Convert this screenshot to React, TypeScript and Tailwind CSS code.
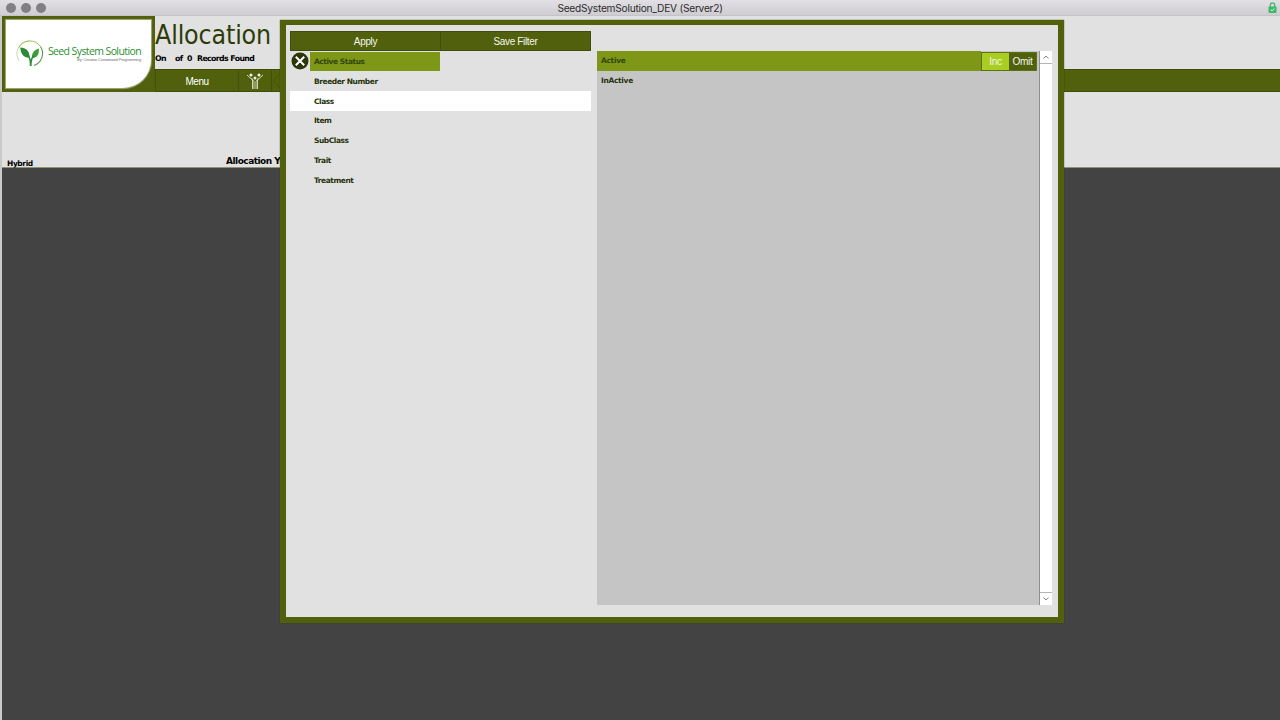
/*
 * Allocation list window with the filter picker open on top of it.
 */
import React, { useState } from "react";
import clsx from "clsx";

const FILTERS = ["Active Status", "Breeder Number", "Class", "Item", "SubClass", "Trait", "Treatment"];

const VALUES = ["Active", "InActive"];

function LeafLogo() {
  return (
    <svg className="h-[28px] w-[28px] shrink-0" viewBox="0 0 28 28" fill="none" aria-hidden="true">
      <path d="M3.200 21A12.800 12.800 0 0 1 13.500 0.900" stroke="#b9d69a" strokeWidth="0.800" />
      <path d="M2.500 8A12.800 12.800 0 0 1 24.500 6.500" stroke="#9cc54a" strokeWidth="1" />
      <path d="M24.500 6.500A12.800 12.800 0 0 1 18 25.500" stroke="#4fa03e" strokeWidth="1.100" />
      <path d="M4.300 7.500c5.400.3 9.400 3 9.200 10.200C8 18 4.600 14 4.300 7.500z" fill="#2c8a35" />
      <path d="M22.800 8.500c.6 5.500-1.500 9.300-6.600 9.800-.7-4.800 1.500-8.300 6.600-9.800z" fill="#3d9c35" />
      <path d="M12 14.500c2 3.500 2.700 7 2.500 11.500M17.500 15.500c-1.800 2.500-2.900 6-2.600 10.500" stroke="#2c8a35" strokeWidth="1.500" />
    </svg>
  );
}

function PeopleIcon() {
  return (
    <svg className="h-[18px] w-[18px]" viewBox="0 0 18 18" fill="none" stroke="#dfe3cb" strokeWidth="0.900" aria-hidden="true">
      <path d="M1 3l5.500 5v9M17 3l-5.500 5v9M8 17V9.500L5.500 6M10 17V9.500L12.500 6" />
      <g fill="#f2f4e8" stroke="none">
        <circle cx="5" cy="3" r="1.500" />
        <circle cx="9" cy="6" r="1.500" />
        <circle cx="13" cy="3" r="1.500" />
      </g>
    </svg>
  );
}

function LockIcon() {
  return (
    <svg className="h-[11px] w-[9px]" viewBox="0 0 9 11" fill="none" aria-hidden="true">
      <path d="M2.300 5V3a2.200 2.200 0 0 1 4.400 0v2" stroke="#3fba68" strokeWidth="1.300" />
      <rect x="0.500" y="4.500" width="8" height="6.500" rx="0.800" fill="#3fba68" />
      <path d="M2.700 7.600l1.300 1.300 2.300-2.400" stroke="#e4f5e9" strokeWidth="1" />
    </svg>
  );
}

function Chevron({ down = false }: { down?: boolean }) {
  return (
    <svg className={clsx("h-[4px] w-[6px]", down && "rotate-180")} viewBox="0 0 6 4" fill="none" aria-hidden="true">
      <path d="M0.500 3.500L3 1l2.500 2.500" stroke="#77776f" strokeWidth="0.900" />
    </svg>
  );
}

function TitleBar() {
  return (
    <header className="relative flex h-4 items-center justify-center border-b border-[#c4c3c6] bg-linear-to-b from-[#e2e0e4] to-[#cfcdd1]">
      <div className="absolute top-[3px] left-[6px] flex gap-[5px]">
        <span className="size-[10px] rounded-full bg-[#808084]" />
        <span className="size-[10px] rounded-full bg-[#808084]" />
        <span className="size-[10px] rounded-full bg-[#808084]" />
      </div>
      <h1 className="font-['Inter',sans-serif] text-[10.200px] leading-4 tracking-[-0.250px] whitespace-pre text-[#2c2b2e]">SeedSystemSolution_DEV (Server2)</h1>
      <div className="absolute top-[2px] right-[3px]">
        <LockIcon />
      </div>
    </header>
  );
}

function Logo() {
  return (
    <div className="h-[76px] w-[153px] shrink-0 bg-[#50600c] pt-[4px] pl-[4px]">
      <div className="flex h-[68px] w-[145px] items-center rounded-br-[28px] bg-white pl-[10px] shadow-[0_0_1px_1px_#a3ab80]">
        <LeafLogo />
        <div className="ml-[4px] flex w-[93px] flex-col items-end pb-px whitespace-nowrap">
          <p className="font-['Open_Sans',sans-serif] text-[10.500px] leading-[12px] tracking-[-0.600px] text-[#2a8f2f]">Seed System Solution</p>
          <p className="font-['Liberation_Sans',sans-serif] text-[4px] leading-[5px] tracking-[-0.150px] text-[#707070]">By: Creative Customized Programming</p>
        </div>
      </div>
    </div>
  );
}

function Header() {
  return (
    <div className="flex h-[76px]">
      <Logo />
      <div className="flex min-w-0 flex-1 flex-col">
        <div className="h-[53px] whitespace-nowrap">
          <h2 className="h-[36px] font-['DejaVu_Sans_Condensed','DejaVu_Sans',sans-serif] text-[26.500px] leading-[37px] tracking-[-0.150px] text-[#2d3c08] [font-stretch:condensed]">Allocation</h2>
          <p className="flex text-[7.800px] leading-[13px] font-bold tracking-[-0.600px] text-black">
            <span className="w-[20px]">On</span>
            <span className="w-[12px]">of</span>
            <span className="w-[10px]">0</span>
            <span>Records Found</span>
          </p>
        </div>
        <nav className="flex h-[23px] border-y border-[#3f4d09] bg-[#50600c] font-['Liberation_Sans',sans-serif]">
          <button className="w-[84px] border-x border-[#435108] pt-px text-[10px] tracking-[-0.500px] text-white">Menu</button>
          <button className="flex w-[33px] items-center justify-center border-r border-[#435108]">
            <PeopleIcon />
          </button>
          <svg className="h-[21px] w-[9px]" viewBox="0 0 9 21" fill="none" aria-hidden="true">
            <path d="M9 2L1.500 10.500 9 19" stroke="#435108" />
          </svg>
        </nav>
      </div>
    </div>
  );
}

function FilterPicker() {
  const [filter, setFilter] = useState("Active Status");
  const [value, setValue] = useState("Active");

  return (
    <div className="absolute top-[20px] left-[280px] flex h-[603px] w-[784px] border-x-[6px] border-t-[5px] border-b-[6px] border-[#50600c] bg-[#e1e1e1] pt-[6px] pl-[4px] shadow-[0_0_1px_#2f3a06]">
      {/* Filter list */}
      <section className="w-[301px]">
        <div className="flex h-[20px] border border-[#414e09] bg-[#50600c] font-['Liberation_Sans',sans-serif] text-[10px] tracking-[-0.350px] text-[#f4f5ee]">
          <button className="w-[150px] border-r border-[#414e09]">Apply</button>
          <button className="flex-1">Save Filter</button>
        </div>
        <ul className="pt-[0.500px]">
          {FILTERS.map((name) => (
            <li
              key={name}
              onClick={() => setFilter(name)}
              className={clsx("flex h-[19.800px] items-center", name === "Class" && "bg-white")}
            >
              <span className="flex w-[20px] justify-center">
                {name === filter && (
                  <svg className="size-[18px]" viewBox="0 0 18 18" fill="none" aria-hidden="true">
                    <circle cx="9" cy="9" r="8.500" fill="#2b3609" />
                    <path d="M4.800 4.800l8.400 8.400M13.200 4.800l-8.400 8.400" stroke="#fff" strokeWidth="2" />
                  </svg>
                )}
              </span>
              <span
                className={clsx(
                  "flex h-full w-[130px] items-center pt-[0.500px] pl-[4px] text-[7.500px] font-bold tracking-[-0.450px]",
                  name === filter ? "bg-[#7e9716] text-[#35460a]" : "text-[#27330a]"
                )}
              >
                {name}
              </span>
            </li>
          ))}
        </ul>
      </section>

      {/* Values of the chosen filter */}
      <section className="mt-[20px] ml-[6px] flex h-[554px]">
        <ul className="w-[442px] bg-[#c5c5c5]">
          {VALUES.map((name) => (
            <li
              key={name}
              onClick={() => setValue(name)}
              className={clsx(
                "flex h-[19.500px] items-center pl-[4px] text-[7.500px] font-bold tracking-[-0.320px]",
                name === value ? "bg-[#7e9716] text-[#35460a]" : "text-[#27330a]"
              )}
            >
              <span className={clsx("flex-1", name !== value && "pt-px")}>{name}</span>
              {name === value && (
                <div className="flex h-full w-[58px] bg-[#c5c5c5] pt-px pr-[2px]">
                  <div className="flex flex-1 border border-[#5d7013] font-['Liberation_Sans',sans-serif] text-[10px] font-normal tracking-[-0.250px] text-[#f4f5ee]">
                    <button className="w-[27px] bg-[#a9cd20]">Inc</button>
                    <button className="flex-1 bg-[#50600c]">Omit</button>
                  </div>
                </div>
              )}
            </li>
          ))}
        </ul>
        <div className="flex w-[13px] flex-col justify-between border-l border-[#8e8e8b] bg-white">
          <div className="flex h-[13px] items-center justify-center border-b border-[#b4b4b1]">
            <Chevron />
          </div>
          <div className="flex h-[13px] items-center justify-center border-t border-[#b4b4b1]">
            <Chevron down />
          </div>
        </div>
      </section>
    </div>
  );
}

export default function App() {
  return (
    <main className="relative flex h-[720px] w-[1280px] flex-col overflow-hidden bg-[#e1e1e1] font-['DejaVu_Sans',sans-serif]">
      <TitleBar />
      <div className="flex flex-1 flex-col border-l-2 border-[#c9c9c9]">
        <Header />
        <div className="flex h-[76px] items-end border-b border-[#8b9470] pl-[5px] font-bold whitespace-nowrap text-black">
          <span className="w-[219px] text-[7.500px] leading-[7px] tracking-[-0.400px]">Hybrid</span>
          <span className="text-[9px] leading-[12px] tracking-[-0.500px]">Allocation Year</span>
        </div>
        <div className="flex-1 bg-[#434343]" />
      </div>
      <FilterPicker />
    </main>
  );
}
